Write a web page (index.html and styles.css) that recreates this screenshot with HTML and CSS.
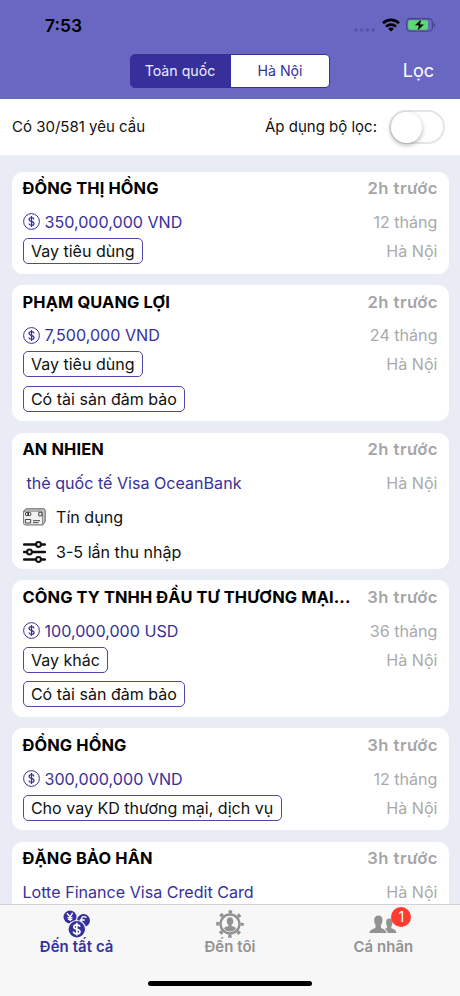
FILE: index.html
```html
<!DOCTYPE html>
<html lang="vi">
<head>
<meta charset="utf-8">
<title>Yêu cầu vay</title>
<link rel="stylesheet" href="styles.css">
</head>
<body>
<svg class="defs" width="0" height="0">
  <symbol id="coin" viewBox="0 0 17 17">
    <circle cx="8.5" cy="8.5" r="7.9" fill="none" stroke="currentColor" stroke-width="1"/>
    <path d="M8.5 3v11M11 6.3C10.7 5 9.7 4.6 8.5 4.6 7 4.6 6 5.4 6 6.5 6 9 11 7.800 11 10.500 11 11.700 9.900 12.400 8.500 12.400 7.100 12.400 6.100 11.800 5.900 10.500" fill="none" stroke="currentColor" stroke-width="1.250"/>
  </symbol>
</svg>
<div class="app">
  <header class="header">
    <div class="status">
      <span class="time">7:53</span>
      <div class="indicators">
        <svg class="dots" width="22" height="4" viewBox="0 0 22 4"><g fill="#5750a6"><circle cx="2" cy="2" r="1.700"/><circle cx="7.700" cy="2" r="1.700"/><circle cx="13.500" cy="2" r="1.700"/><circle cx="19.200" cy="2" r="1.700"/></g></svg>
        <svg width="18" height="14" viewBox="0 0 18 14"><g fill="none" stroke="#000" stroke-width="2.700"><path d="M1 5.200a11.500 11.500 0 0 1 16 0"/><path d="M4 8.600a7.200 7.200 0 0 1 10 0"/></g><path d="M9 13.500 6.100 10.800a4.200 4.200 0 0 1 5.800 0z"/></svg>
        <svg class="battery" width="30" height="14" viewBox="0 0 30 14"><rect x=".6" y=".6" width="25.800" height="12.600" rx="3.800" fill="none" stroke="#453f86" stroke-width="1.100"/><rect x="2.200" y="2.200" width="19.800" height="9.500" rx="2" fill="#5bdc72"/><path d="M27.600 4.700v4.600q1.500-.6 1.500-2.300t-1.500-2.300z" fill="#453f86"/><path d="M15.600.8 8.300 7.600h4.200l-1.300 5.600 7.300-7h-4.200z" stroke="#5bdc72" stroke-width=".5"/></svg>
      </div>
    </div>
    <div class="nav">
      <div class="segments"><span class="segment on">Toàn quốc</span><span class="segment">Hà Nội</span></div>
      <span class="action">Lọc</span>
    </div>
  </header>
  <div class="filter">
    <span class="count">Có 30/581 yêu cầu</span>
    <span class="apply">Áp dụng bộ lọc:</span>
    <span class="switch"><i class="knob"></i></span>
  </div>
  <main class="list">
    <article class="card">
      <div class="row head"><h2 class="name">ĐỒNG THỊ HỒNG</h2><span class="ago">2h trước</span></div>
      <div class="row"><span class="amount"><svg class="coin"><use href="#coin"/></svg>350,000,000 VND</span><span class="meta">12 tháng</span></div>
      <div class="row tags"><span class="tag">Vay tiêu dùng</span><span class="meta">Hà Nội</span></div>
    </article>
    <article class="card tall">
      <div class="row head"><h2 class="name">PHẠM QUANG LỢI</h2><span class="ago">2h trước</span></div>
      <div class="row"><span class="amount"><svg class="coin"><use href="#coin"/></svg>7,500,000 VND</span><span class="meta">24 tháng</span></div>
      <div class="row tags"><span class="tag">Vay tiêu dùng</span><span class="meta">Hà Nội</span></div>
      <div class="row tags"><span class="tag">Có tài sản đảm bảo</span></div>
    </article>
    <article class="card tall">
      <div class="row head"><h2 class="name">AN NHIEN</h2><span class="ago">2h trước</span></div>
      <div class="row"><span class="product inset">thẻ quốc tế Visa OceanBank</span><span class="meta">Hà Nội</span></div>
      <div class="row detail"><svg width="23" height="18" viewBox="0 0 23 18"><path d="M3 .8h17.500q1.700 0 1.700 2v10.500l-2.200 3.500H2.500q-2 0-2-2V3.300z" fill="#c9c9c9" stroke="#555" stroke-width=".9"/><path d="M.5 5Q.5 3.200 2.500 3.200h15q2 0 2 2v11.600h-17q-2 0-2-2z" fill="#f1f1f1" stroke="#777" stroke-width=".8"/><g fill="none" stroke="#333" stroke-width=".9"><circle cx="4" cy="6" r="1.700"/><circle cx="6.300" cy="6" r="1.700"/><path d="M15.800 4.300h3v3.600h-3zM2.300 11.500h5.400V15H2.300zM10 12.700h7M10 14.700h5.500"/></g></svg><span>Tín dụng</span></div>
      <div class="row detail"><svg width="23" height="22" viewBox="0 0 23 22"><g fill="#fff" stroke="#111" stroke-width="2"><path d="M1 3.500h21M1 11h21M1 18.500h21" stroke-width="2.300" stroke-linecap="round"/><circle cx="15.500" cy="3.500" r="2.400"/><circle cx="6.500" cy="11" r="2.400"/><circle cx="15.500" cy="18.500" r="2.400"/></g></svg><span>3-5 lần thu nhập</span></div>
    </article>
    <article class="card tall">
      <div class="row head"><h2 class="name">CÔNG TY TNHH ĐẦU TƯ THƯƠNG MẠI...</h2><span class="ago">3h trước</span></div>
      <div class="row"><span class="amount"><svg class="coin"><use href="#coin"/></svg>100,000,000 USD</span><span class="meta">36 tháng</span></div>
      <div class="row tags"><span class="tag">Vay khác</span><span class="meta">Hà Nội</span></div>
      <div class="row tags"><span class="tag">Có tài sản đảm bảo</span></div>
    </article>
    <article class="card">
      <div class="row head"><h2 class="name">ĐỒNG HỒNG</h2><span class="ago">3h trước</span></div>
      <div class="row"><span class="amount"><svg class="coin"><use href="#coin"/></svg>300,000,000 VND</span><span class="meta">12 tháng</span></div>
      <div class="row tags"><span class="tag">Cho vay KD thương mại, dịch vụ</span><span class="meta">Hà Nội</span></div>
    </article>
    <article class="card">
      <div class="row head"><h2 class="name">ĐẶNG BẢO HÂN</h2><span class="ago">3h trước</span></div>
      <div class="row"><span class="product">Lotte Finance Visa Credit Card</span><span class="meta">Hà Nội</span></div>
    </article>
  </main>
  <footer class="tabs">
    <div class="tab active">
      <svg width="28" height="28" viewBox="0 0 28 28"><g fill="#35309a"><circle cx="7" cy="7" r="6.500"/><circle cx="20.500" cy="10.500" r="6.500"/><circle cx="13.800" cy="19.200" r="9.300" fill="#f7f7f7"/><circle cx="13.800" cy="19.200" r="8.200"/></g><g fill="none" stroke="#fff" stroke-width="1.400"><path d="m3.900 3.200 3.300 3.700 2.400-4M7.200 6.900V11M4.500 7.600h5M4.800 9.400h4.500"/><path d="M23.500 7.600q-4-2.500-5 1.200v3M16.800 10h5"/><path stroke-width="1.700" d="M13.800 12.800v12.800M17 16.800q-.5-2-3.200-2-3 0-3 2.200c0 3 6.200 1.500 6.200 4.700 0 1.300-1.300 2.200-3.200 2.200-2.200 0-3.200-.8-3.400-2.400"/></g></svg>
      <span>Đến tất cả</span>
    </div>
    <div class="tab">
      <svg width="28" height="28" viewBox="0 0 28 28"><g fill="none" stroke="#929292"><circle cx="14" cy="14" r="12.200" stroke-width="3.200" stroke-dasharray="3.500 6.082" stroke-dashoffset="1.750"/><circle cx="14" cy="14" r="9.500" stroke-width="2.400"/></g><g fill="#929292"><ellipse cx="14" cy="11.300" rx="3.200" ry="4"/><path d="M12.500 13.500h3v2.500q4.500 1 4.500 2.500-2.200 3-6 3t-6-3q0-1.500 4.500-2.500z"/></g></svg>
      <span>Đến tôi</span>
    </div>
    <div class="tab">
      <div class="people"><svg width="28" height="28" viewBox="0 0 28 28"><g fill="#929292"><path d="M9.500 5.500c3 0 4.200 2 4 5q-.2 3-1.500 4.500v2.500c0 1 5.500 2 5.500 5.500H.3c0-3.500 6.200-4.500 6.200-5.500V15Q5.300 13.500 5.200 10.500c-.2-3 1.300-5 4.300-5z"/><path d="M20.500 8.500c2.200 0 3.200 1.600 3.100 4q-.1 2.500-1.300 3.800v2q5 1.200 5 4.700h-8.500q-.5-3-3-4.200l2.300-.7v-1.800q-.9-1.300-1-3.800c-.1-2.400 1.200-4 3.400-4z"/></g></svg><b class="badge">1</b></div>
      <span>Cá nhân</span>
    </div>
    <div class="home"></div>
  </footer>
</div>
</body>
</html>
```
FILE: styles.css
```css
* { box-sizing: border-box; }
body { margin: 0; font-family: Inter, "Liberation Sans", sans-serif; color: #111; }
.defs { display: block; }
.app { width: 460px; height: 996px; display: flex; flex-direction: column; overflow: hidden; background: #e9ecf4; }
.header { height: 99px; flex: none; background: #6a67c3; }
.status { height: 52px; padding: 0 24px 2px 45px; display: flex; align-items: center; justify-content: space-between; }
.time { font-size: 17.4px; font-weight: 600; color: #000; }
.indicators { display: flex; align-items: center; }
.dots { margin: 9px 6px 0 0; }
.battery { margin-left: 6px; }
.nav { display: grid; grid-template-columns: 130px 200px 1fr; align-items: center; height: 38px; }
.segments { grid-column: 2; height: 34px; display: flex; border: 1px solid #37309a; border-radius: 5px; overflow: hidden; background: #37309a; }
.segment { flex: 1; display: flex; align-items: center; justify-content: center; padding-bottom: 1px; font-size: 14.2px; color: #37309a; background: #fff; }
.segment.on { padding-right: 2px; color: #ececff; background: #37309a; }
.action { justify-self: end; padding: 0 26px 1px 0; font-size: 18px; color: #fff; }
.filter { height: 55.5px; flex: none; display: flex; align-items: center; padding: 0 15px 0 12px; background: #fff; font-size: 15px; }
.apply { margin-left: auto; }
.switch { width: 56px; height: 34px; margin-left: 12px; border: 2px solid #e5e5e5; border-radius: 17px; }
.knob { display: block; width: 31px; height: 31px; border-radius: 50%; background: #fff; box-shadow: 0 2px 5px rgba(0,0,0,.3); }
.list { flex: 1; min-height: 0; overflow: hidden; padding: 17px 11.5px 0; display: flex; flex-direction: column; gap: 11.4px; }
.card { flex: none; height: 102px; padding: 0 11px; border-radius: 11px; background: #fff; font-size: 16.1px; }
.card.tall { height: 136.4px; }
.row { display: flex; align-items: center; justify-content: space-between; height: 34.2px; }
.row.head { height: 33.4px; }
.row.tags { height: 24px; }
.row.tags + .tags { margin-top: 10.2px; }
.name { margin: 0; font-size: 16.4px; font-weight: 700; letter-spacing: .13px; color: #000; white-space: nowrap; }
.ago { font-size: 16.6px; font-weight: 600; letter-spacing: .45px; margin-right: -.45px; color: #a5a5a8; }
.meta { color: #aaa; }
.amount, .product { display: flex; align-items: center; color: #37309a; }
.inset { padding-left: 4px; }
.coin { width: 17px; height: 17px; margin-right: 5px; }
.tag { height: 26px; display: flex; align-items: center; padding: 0 7.4px; border: 1px solid #5048a8; border-radius: 5px; font-size: 16.05px; color: #111; }
.detail { justify-content: flex-start; gap: 10.5px; }
.tabs { height: 92.500px; flex: none; border-top: 1px solid #d3d3d6; background: #f7f7f7; display: grid; grid-template-columns: repeat(3, 1fr); grid-template-rows: 54px 1fr; }
.tab { display: flex; flex-direction: column; align-items: center; padding-top: 5px; font-size: 14.9px; font-weight: 600; letter-spacing: .1px; color: #929292; }
.tab svg { display: block; }
.tab > span { line-height: 19px; }
.active { color: #35309a; }
.people { position: relative; }
.badge { position: absolute; left: 22px; top: -3px; width: 20px; height: 20px; border-radius: 50%; background: #ff3b30; color: #fff; font-size: 14px; font-weight: 400; letter-spacing: 0; line-height: 20px; text-align: center; }
.home { grid-column: 1 / -1; justify-self: center; width: 164px; height: 5px; margin-top: 22.500px; border-radius: 3px; background: #000; }
```
